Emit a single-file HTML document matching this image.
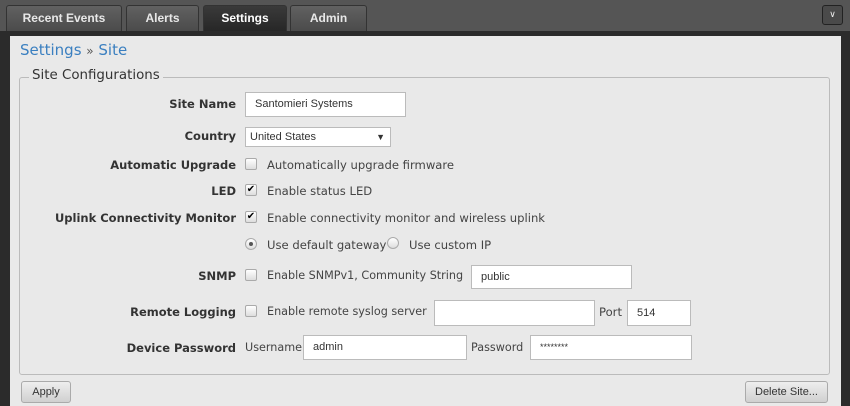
<!DOCTYPE html>
<html><head><style>
*{box-sizing:border-box}
body{margin:0;width:850px;height:406px;overflow:hidden;background:#555;font-family:"DejaVu Sans","Liberation Sans",sans-serif;position:relative}
.tab{position:absolute;top:5px;height:27px;background:linear-gradient(#616161,#4a4a4a);border:1px solid #333;border-bottom:none;border-radius:3px 3px 0 0;color:#e8e8e8;font:bold 12px "Liberation Sans",sans-serif;text-align:center;line-height:25px}
.tab.act{background:linear-gradient(#3a3a3a,#262626);color:#fff}
.frame{position:absolute;left:0;top:31px;width:850px;height:375px;background:#2b2b2b}
.panel{position:absolute;left:10px;top:36px;width:831px;height:370px;background:#e9e9e9}
.abs{position:absolute}
.lbl{position:absolute;right:614px;font:bold 11.5px "DejaVu Sans",sans-serif;color:#333;white-space:nowrap}
.t{position:absolute;font-size:11.6px;color:#444;white-space:nowrap}
.inp{position:absolute;background:#fff;border:1px solid #bbb;font:11px "Liberation Sans",sans-serif;color:#333;padding-left:9px}
.cb{position:absolute;width:12px;height:12px;border:1px solid #aaa;border-radius:2px;background:linear-gradient(#fff,#ddd)}
.rd{position:absolute;width:12px;height:12px;border:1px solid #aaa;border-radius:50%;background:linear-gradient(#fff,#ddd)}
.btn{position:absolute;height:22px;border:1px solid #aaa;border-radius:3px;background:linear-gradient(#eee,#d0d0d0);font:11px "Liberation Sans",sans-serif;color:#333;text-align:center;line-height:20px}
</style></head><body>
<div class="tab" style="left:6px;width:116px">Recent Events</div>
<div class="tab" style="left:126px;width:73px">Alerts</div>
<div class="tab act" style="left:203px;width:84px">Settings</div>
<div class="tab" style="left:290px;width:77px">Admin</div>
<div class="abs" style="left:822px;top:5px;width:21px;height:20px;border:1px solid #222;border-radius:3px;background:#4a4a4a;color:#eee;font-size:9px;text-align:center;line-height:18px">&#8744;</div>
<div class="frame"></div>
<div class="panel"></div>
<div class="abs" style="left:20px;top:41px;font-size:15px;color:#3a7fc0;white-space:nowrap">Settings <span style="color:#555;font-size:12px">»</span> Site</div>
<div class="abs" style="left:19px;top:77px;width:811px;height:298px;border:1px solid #bbb;border-radius:3px"></div>
<div class="abs" style="left:29px;top:68px;padding:0 3px;background:#e9e9e9;font-size:13.4px;color:#333">Site Configurations</div>

<div class="lbl" style="top:97px">Site Name</div>
<div class="inp" style="left:245px;top:92px;width:161px;height:25px;line-height:23px">Santomieri Systems</div>
<div class="lbl" style="top:129px">Country</div>
<div class="inp" style="left:245px;top:127px;width:146px;height:20px;line-height:18px;padding-left:4px">United States<span style="position:absolute;right:5px;font-size:9px">▼</span></div>
<div class="lbl" style="top:158px">Automatic Upgrade</div>
<div class="cb" style="left:245px;top:158px"></div>
<div class="t" style="left:267px;top:158px">Automatically upgrade firmware</div>
<div class="lbl" style="top:184px">LED</div>
<div class="cb" style="left:245px;top:184px;font-size:10px;line-height:10px;text-align:center">✔</div>
<div class="t" style="left:267px;top:184px">Enable status LED</div>
<div class="lbl" style="top:211px">Uplink Connectivity Monitor</div>
<div class="cb" style="left:245px;top:211px;font-size:10px;line-height:10px;text-align:center">✔</div>
<div class="t" style="left:267px;top:211px">Enable connectivity monitor and wireless uplink</div>
<div class="rd" style="left:245px;top:238px"><div style="margin:3px;width:4px;height:4px;border-radius:50%;background:#555"></div></div>
<div class="t" style="left:267px;top:238px">Use default gateway</div>
<div class="rd" style="left:387px;top:237px"></div>
<div class="t" style="left:409px;top:238px">Use custom IP</div>
<div class="lbl" style="top:269px">SNMP</div>
<div class="cb" style="left:245px;top:269px"></div>
<div class="t" style="left:267px;top:269px;font-size:11.2px">Enable SNMPv1, Community String</div>
<div class="inp" style="left:471px;top:265px;width:161px;height:24px;line-height:22px">public</div>
<div class="lbl" style="top:305px">Remote Logging</div>
<div class="cb" style="left:245px;top:305px"></div>
<div class="t" style="left:267px;top:305px;font-size:11.2px">Enable remote syslog server</div>
<div class="inp" style="left:434px;top:300px;width:161px;height:26px"></div>
<div class="t" style="left:599px;top:305px">Port</div>
<div class="inp" style="left:627px;top:300px;width:64px;height:26px;line-height:24px">514</div>
<div class="lbl" style="top:341px">Device Password</div>
<div class="t" style="left:245px;top:341px;font-size:11.2px">Username</div>
<div class="inp" style="left:303px;top:335px;width:164px;height:25px;line-height:23px">admin</div>
<div class="t" style="left:471px;top:341px;font-size:11.2px">Password</div>
<div class="inp" style="left:530px;top:335px;width:162px;height:25px;line-height:23px;font-size:9px">********</div>
<div class="btn" style="left:21px;top:381px;width:50px">Apply</div>
<div class="btn" style="left:745px;top:381px;width:83px">Delete Site...</div>
</body></html>
